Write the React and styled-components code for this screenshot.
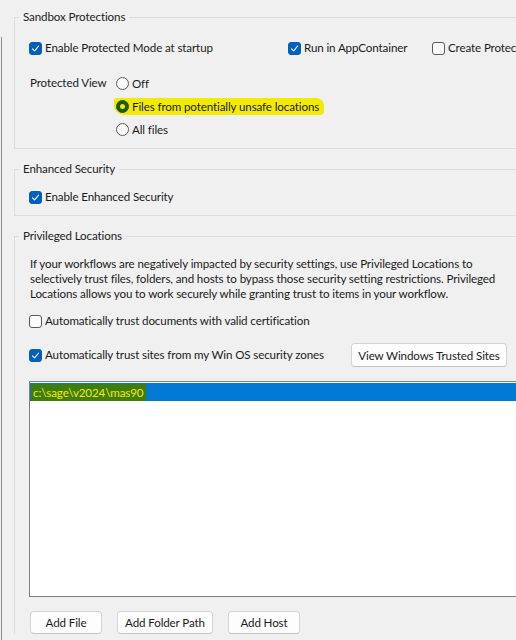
import styled, { createGlobalStyle } from "styled-components";

const GlobalStyle = createGlobalStyle`
  html, body {
    margin: 0;
    padding: 0;
    background: #f0f0f0;
    overflow: hidden;
  }
  body {
    font-family: Lato, "Noto Sans", sans-serif;
    font-size: 11.6px;
    letter-spacing: -0.12px;
    color: #1b1b1b;
  }
`;

const Page = styled.div`
  width: 516px;
  height: 640px;
  display: grid;
  grid-template-columns: 2px 1fr;
  overflow: hidden;
`;

const SideEdge = styled.div`
  margin-top: 37px;
  border-right: 1px solid #8c8c8c;
`;

const Main = styled.div`
  padding-top: 17px;
  overflow: hidden;
`;

const Group = styled.div`
  margin: ${(p) => p.$top || 0}px -40px 0 12px;
  border: 1px solid #dcdcdc;
  border-right: none;
  border-bottom: ${(p) => (p.$open ? "none" : "1px solid #dcdcdc")};
  padding: 0 0 ${(p) => p.$bottom || 0}px 14px;
`;

const Title = styled.div`
  width: max-content;
  margin: -9px 0 0 -10px;
  padding: 0 4px;
  background: #f0f0f0;
  line-height: 16px;
  color: #222;
`;

const Row = styled.div`
  display: grid;
  grid-template-columns: ${(p) => p.$cols || "auto"};
  align-items: ${(p) => p.$align || "center"};
  margin-top: ${(p) => p.$top || 0}px;
  min-height: 18px;
`;

const Check = styled.label`
  display: flex;
  align-items: center;
  gap: 3px;
  line-height: 18px;
  white-space: nowrap;
`;

const Box = styled.span`
  width: 13px;
  height: 13px;
  box-sizing: border-box;
  border-radius: 3px;
  display: grid;
  place-items: center;
  background: ${(p) => (p.$on ? "#005fb8" : "#fbfbfb")};
  border: 1px solid ${(p) => (p.$on ? "#005fb8" : "#5a5a5a")};
  flex: none;
`;

const Label = styled.span`
  line-height: 18px;
  padding-left: ${(p) => p.$indent || 0}px;
`;

const Radios = styled.div`
  display: flex;
  flex-direction: column;
  gap: 5px;
`;

const Radio = styled.label`
  display: inline-flex;
  align-items: center;
  gap: 3px;
  height: 18px;
  white-space: nowrap;
  justify-self: start;
`;

const Dot = styled.span`
  width: 13px;
  height: 13px;
  box-sizing: border-box;
  border-radius: 50%;
  flex: none;
  display: grid;
  place-items: center;
  border: 1px solid ${(p) => (p.$on ? "#1d5a0e" : "#5a5a5a")};
  background: ${(p) => (p.$on ? "#1d5a0e" : "#fbfbfb")};
  &::after {
    content: "";
    display: ${(p) => (p.$on ? "block" : "none")};
    width: 5px;
    height: 5px;
    border-radius: 50%;
    background: #f2ea00;
  }
`;

const Marker = styled.span`
  display: inline-flex;
  align-items: center;
  gap: 3px;
  background: #f2ea00;
  margin-left: -2px;
  padding: 2px 5px 2px 2px;
  border-radius: 3px 8px 4px 10px;
`;

const Para = styled.p`
  margin: 12px 0 0 1px;
  line-height: 15px;
`;

const Button = styled.button`
  font: inherit;
  letter-spacing: inherit;
  color: #1b1b1b;
  background: #fdfdfd;
  border: 1px solid #d4d4d4;
  border-bottom-color: #c4c4c4;
  border-radius: 4px;
  height: ${(p) => p.$h || 23}px;
  padding: 0;
  width: ${(p) => p.$w}px;
  white-space: nowrap;
  cursor: default;
`;

const List = styled.div`
  margin-top: 14px;
  height: 216px;
  box-sizing: border-box;
  border: 1px solid #7f7f7f;
  border-right: none;
  background: #fff;
  padding-top: 1px;
`;

const Item = styled.div`
  height: 18px;
  background: ${(p) => (p.$sel ? "#0078d4" : "transparent")};
  display: flex;
  align-items: center;
`;

const ItemText = styled.span`
  margin-left: 1px;
  padding: 0 3px 0 2px;
  line-height: 17px;
  background: ${(p) => (p.$marked ? "#3f7d0c" : "transparent")};
  color: ${(p) => (p.$marked ? "#f2ec00" : "#fff")};
`;

const Buttons = styled.div`
  display: flex;
  gap: 15px;
  margin: 14px 0 0 1px;
`;

function Tick() {
  return (
    <svg width="9" height="9" viewBox="0 0 9 9">
      <path
        d="M1.5 4.8 L3.6 6.8 L7.6 2.2"
        fill="none"
        stroke="#fff"
        strokeWidth="1.1"
        strokeLinecap="round"
        strokeLinejoin="round"
      />
    </svg>
  );
}

function CheckBox({ on, children }) {
  return (
    <Check>
      <Box $on={on}>{on && <Tick />}</Box>
      <Label>{children}</Label>
    </Check>
  );
}

export default function App() {
  return (
    <>
      <GlobalStyle />
      <Page>
        <SideEdge />
        <Main>
          <Group $bottom={10}>
            <Title>Sandbox Protections</Title>
            <Row $cols="259px 144px auto" $top={14}>
              <CheckBox on>Enable Protected Mode at startup</CheckBox>
              <CheckBox on>Run in AppContainer</CheckBox>
              <CheckBox>Create Protected Mode log file</CheckBox>
            </Row>
            <Row $cols="87px auto" $top={17} $align="start">
              <Label $indent={1}>Protected View</Label>
              <Radios>
                <Radio>
                  <Dot />
                  <span>Off</span>
                </Radio>
                <Radio>
                  <Marker>
                    <Dot $on />
                    <span>Files from potentially unsafe locations</span>
                  </Marker>
                </Radio>
                <Radio>
                  <Dot />
                  <span>All files</span>
                </Radio>
              </Radios>
            </Row>
          </Group>

          <Group $top={20} $bottom={9}>
            <Title>Enhanced Security</Title>
            <Row $top={11}>
              <CheckBox on>Enable Enhanced Security</CheckBox>
            </Row>
          </Group>

          <Group $top={20} $open>
            <Title>Privileged Locations</Title>
            <Para>
              If your workflows are negatively impacted by security settings, use Privileged Locations to
              <br />
              selectively trust files, folders, and hosts to bypass those security setting restrictions. Privileged
              <br />
              Locations allows you to work securely while granting trust to items in your workflow.
            </Para>
            <Row $top={11}>
              <CheckBox>Automatically trust documents with valid certification</CheckBox>
            </Row>
            <Row $cols="322px auto" $top={13}>
              <CheckBox on>Automatically trust sites from my Win OS security zones</CheckBox>
              <div>
                <Button $h={24} $w={156}>
                  View Windows Trusted Sites
                </Button>
              </div>
            </Row>
            <List>
              <Item $sel>
                <ItemText $marked>c:\sage\v2024\mas90</ItemText>
              </Item>
            </List>
            <Buttons>
              <Button $w={72}>Add File</Button>
              <Button $w={96}>Add Folder Path</Button>
              <Button $w={72}>Add Host</Button>
            </Buttons>
          </Group>
        </Main>
      </Page>
    </>
  );
}
